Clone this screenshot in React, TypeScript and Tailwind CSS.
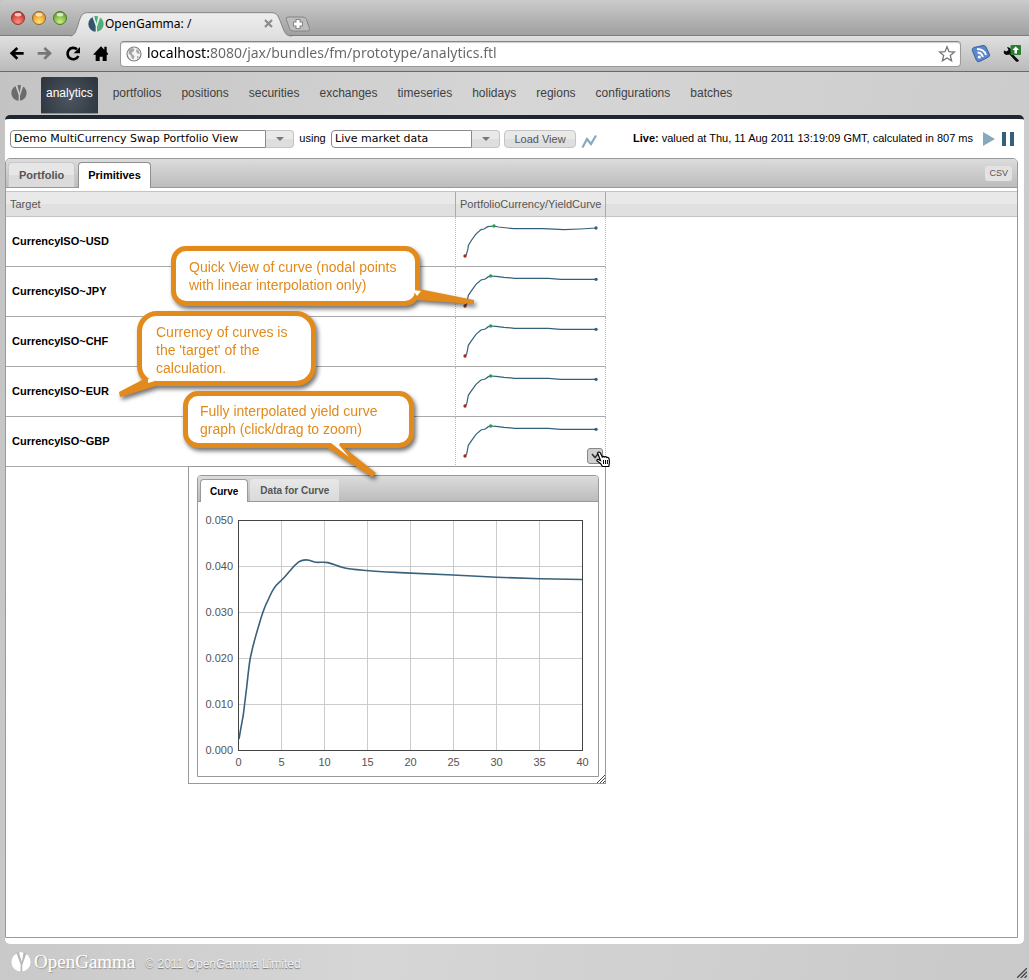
import React from "react";

const NAV = [
  "analytics",
  "portfolios",
  "positions",
  "securities",
  "exchanges",
  "timeseries",
  "holidays",
  "regions",
  "configurations",
  "batches",
];

const ROWS = ["USD", "JPY", "CHF", "EUR", "GBP"];

function GammaMark({ className, left, right, gap }: { className: string; left: string; right: string; gap: string }) {
  return (
    <svg viewBox="0 0 48 48" className={className} aria-hidden="true">
      <path d="M24 1 A23 23 0 0 0 24 47 Z" fill={left} />
      <path d="M24 1 A23 23 0 0 1 24 47 Z" fill={right} />
      <path d="M13 2 L19 0 L26 24 L30 1 L37 3 L27 32 V48 H23 V30 Z" fill={gap} />
      <path d="M20 1 H29 L25 19 Z" fill={right} />
    </svg>
  );
}

function TrafficLight({ from, to, ring }: { from: string; to: string; ring: string }) {
  const id = "light" + ring.slice(1);
  return (
    <svg viewBox="0 0 14 14" className="size-3.5" aria-hidden="true">
      <defs>
        <radialGradient id={id} cx="50%" cy="80%" r="75%">
          <stop offset="0" stopColor={from} />
          <stop offset="1" stopColor={to} />
        </radialGradient>
      </defs>
      <circle cx="7" cy="7" r="6.5" fill={`url(#${id})`} stroke={ring} />
      <ellipse cx="7" cy="3.6" rx="3.4" ry="1.9" fill="#fff" opacity="0.7" />
    </svg>
  );
}

function TitleBar() {
  return (
    <div className="flex h-9 items-center rounded-t-md border-b border-[#7d7d7d] bg-linear-to-b from-[#cbcbcb] to-[#a0a0a0] pl-[11px]">
      <div className="flex gap-[7px]">
        <TrafficLight from="#ff8d80" to="#c22a22" ring="#8a3a36" />
        <TrafficLight from="#ffe26a" to="#dd8a1e" ring="#96652a" />
        <TrafficLight from="#c9ef7c" to="#5d9c2c" ring="#4e7a30" />
      </div>
      <div className="relative ml-[3px] h-9 w-[222px]">
        <svg viewBox="210 32 666 78" className="absolute top-[11px] left-0 h-[26px] w-[222px]" aria-hidden="true">
          <defs>
            <linearGradient id="tabfill" x1="0" y1="0" x2="0" y2="1">
              <stop offset="0" stopColor="#eeeeee" />
              <stop offset="1" stopColor="#dfdfdf" />
            </linearGradient>
          </defs>
          <path
            d="M208 107 C224 107 226 96 232 80 C240 56 242 37 262 37 H814 C834 37 836 52 846 76 C854 98 858 107 876 107 V112 H208 Z"
            fill="url(#tabfill)"
          />
          <path
            d="M208 107 C224 107 226 96 232 80 C240 56 242 37 262 37 H814 C834 37 836 52 846 76 C854 98 858 107 876 107"
            fill="none"
            stroke="#858585"
            strokeWidth="3"
          />
        </svg>
        <div className="relative flex h-full items-center pt-[12px] pr-[19px] pl-[18px]">
          <GammaMark className="size-4" left="#33566e" right="#4fae78" gap="#ececec" />
          <span className="ml-px flex-1 font-['Noto_Sans',sans-serif] text-[12px] leading-4 text-black">OpenGamma: /</span>
          <button type="button" aria-label="Close tab" className="size-[9px]">
            <svg viewBox="0 0 9 9" className="size-[9px]">
              <path d="M1 1 L8 8 M8 1 L1 8" stroke="#8b8b8b" strokeWidth="2.2" />
            </svg>
          </button>
        </div>
      </div>
      <button type="button" aria-label="New tab" className="-ml-[7px] pt-[12px]">
        <svg viewBox="0 0 26 16" className="h-4 w-[26px]">
          <path d="M3 1 H18 Q20.500 1 21.500 3.500 L24.500 12.500 Q25 15 22.500 15 H8 Q5.500 15 4.500 12.500 L1.300 3.500 Q.8 1 3 1Z" fill="#bdbdbd" stroke="#858585" />
          <path d="M13 3 V13 M8 8 H18" stroke="#858585" strokeWidth="5" />
          <path d="M13 4 V12 M9 8 H17" stroke="#fff" strokeWidth="3" />
        </svg>
      </button>
    </div>
  );
}

function Toolbar() {
  return (
    <div className="flex h-9 items-center gap-3 border-b border-[#6a6a6a] bg-linear-to-b from-[#e0e0e0] to-[#bababa] pr-2 pl-2">
      <button type="button" aria-label="Back">
        <svg viewBox="25 138 48 48" className="size-4">
          <path d="M53 144 L36 160 L53 176 M36 160 H72" fill="none" stroke="#000" strokeWidth="8" />
        </svg>
      </button>
      <button type="button" aria-label="Forward">
        <svg viewBox="109 138 48 48" className="size-4">
          <path d="M134 144 L151 160 L134 176 M151 160 H114" fill="none" stroke="#777" strokeWidth="8" />
        </svg>
      </button>
      <button type="button" aria-label="Reload">
        <svg viewBox="193 138 48 48" className="size-4">
          <path d="M236 168 A17 17 0 1 1 232 148" fill="none" stroke="#000" strokeWidth="8" />
          <path d="M242 140 V160 H222 Z" fill="#000" />
        </svg>
      </button>
      <button type="button" aria-label="Home">
        <svg viewBox="277 136 48 48" className="size-4">
          <path d="M304 137 L314 147 V138 H321 V154 L328 162 H321 V181 H309 V168 H300 V181 H288 V162 H280 Z" fill="#000" />
        </svg>
      </button>
      <div className="-mr-0.5 flex h-[26px] min-w-0 flex-1 items-center rounded-[4px] border border-[#9a9a9a] border-t-[#858585] bg-white pr-1 pl-[5px] shadow-[inset_0_1px_1px_#ccc]">
        <svg viewBox="0 0 16 16" className="size-4 shrink-0" aria-hidden="true">
          <circle cx="8" cy="8" r="7" fill="#f4f4f4" stroke="#808080" strokeWidth="1.200" />
          <path d="M3 4 L6 2 L8.500 3 L7.500 5.500 L5.500 7 L7 9 L8.500 10 L7.500 13.500 L5.500 12 L5 9.500 L2.500 7.500 Z M10.500 3 L13 5 L13.800 8 L11.500 7.500 L10 5.500 Z M11 10 L13 10.500 L11 13 Z" fill="#a5a5a5" />
        </svg>
        <input
          type="text"
          aria-label="Address"
          defaultValue="localhost:8080/jax/bundles/fm/prototype/analytics.ftl"
          className="mb-0.5 ml-[5px] min-w-0 flex-1 bg-[linear-gradient(90deg,#000_62px,#666_62px)] bg-clip-text font-['Noto_Sans',sans-serif] text-[14px] leading-5 text-transparent outline-none"
        />
        <button type="button" aria-label="Bookmark">
          <svg viewBox="0 0 18 18" className="size-[18px]">
            <path d="M9 1.800 L11 6.700 L16.400 7.100 L12.300 10.500 L13.600 15.800 L9 12.900 L4.400 15.800 L5.700 10.500 L1.600 7.100 L7 6.700 Z" fill="#fff" stroke="#777" strokeWidth="1.300" />
          </svg>
        </button>
      </div>
      <button type="button" aria-label="RSS feed">
        <svg viewBox="0 0 20 20" className="size-5">
          <path d="M3 3.500 L12 1.500 Q14 1 15 3 L18.500 10.500 Q19 12 17.500 13 L8.500 17.500 Q6.500 18.500 5.500 16.500 L1.300 6.500 Q.8 4.300 3 3.500Z" fill="#5b88cc" stroke="#3560a6" />
          <path d="M6 5 Q13 5 15 11 M6.500 8.500 Q10.500 8.500 12 13" fill="none" stroke="#fff" strokeWidth="1.800" />
          <circle cx="8.300" cy="13" r="1.600" fill="#fff" />
        </svg>
      </button>
      <button type="button" aria-label="Settings">
        <svg viewBox="0 0 18 18" className="size-[18px]">
          <path d="M4 2 L5.500 5 L3.500 6.500 L1 5.500 Q0 9.500 3.500 10 L6.500 9.500 L13 16.500 Q15 17.500 16 15.500 L8.500 8 Q9.500 3 4 2Z" fill="#0a0a0a" />
          <rect x="7.500" y="0" width="10.500" height="10" rx="1" fill="#2c7d33" />
          <path d="M12.700 1.500 L16 5 H14 V8.500 H11.500 V5 H9.400 Z" fill="#fff" />
        </svg>
      </button>
    </div>
  );
}

function Nav() {
  return (
    <nav className="flex h-[43px] items-start gap-2.5 pt-[5px] pl-[11px]">
      <a href="#home" aria-label="Home page" className="mt-2 mr-1">
        <GammaMark className="size-4" left="#6b6b6b" right="#6b6b6b" gap="#cacaca" />
      </a>
      {NAV.map((item, i) => (
        <a
          key={item}
          href={"#" + item}
          className={
            i === 0
              ? "h-[37px] rounded-t-xs border-b border-[#8b8f92] bg-[radial-gradient(circle_at_50%_60%,#4d565e,#2b343d)] px-[5px] text-[12px] leading-8 text-white"
              : "h-[37px] px-[5px] text-[12px] leading-8 text-[#3f3f3f]"
          }
        >
          {item}
        </a>
      ))}
    </nav>
  );
}

function Combo({ label, value, width }: { label: string; value: string; width: string }) {
  return (
    <div className="flex h-[18px]">
      <input
        type="text"
        aria-label={label}
        defaultValue={value}
        className={
          width +
          " rounded-l-[4px] border border-[#8a8a8a] bg-white pl-[3px] font-['DejaVu_Sans',sans-serif] text-[11px] leading-4 text-black outline-none"
        }
      />
      <button
        type="button"
        aria-label={"Open " + label}
        className="flex w-7 items-center justify-center rounded-r-[4px] border border-l-0 border-[#c4c4c4] bg-linear-to-b from-[#e9e9e9] from-50% to-[#dedede] to-50%"
      >
        <svg viewBox="0 0 8 4" className="h-1 w-2">
          <path d="M0 0 H8 L4 4 Z" fill="#777" />
        </svg>
      </button>
    </div>
  );
}

function Controls() {
  return (
    <div className="flex h-[39px] items-center pr-[10px] pl-[5px] text-[11px] text-black">
      <Combo label="view" value="Demo MultiCurrency Swap Portfolio View" width="w-64" />
      <span className="mx-[5px] w-[27px] text-center">using</span>
      <Combo label="market data" value="Live market data" width="w-[141px]" />
      <button
        type="button"
        className="ml-1 h-[18px] w-[72px] rounded-[4px] border border-[#c4c4c4] bg-linear-to-b from-[#e9e9e9] from-50% to-[#dedede] to-50% text-[11px] leading-4 text-[#555]"
      >
        Load View
      </button>
      <svg viewBox="0 0 18 16" className="mt-1 ml-[5px] h-4 w-[18px]" aria-hidden="true">
        <path d="M1.500 14.500 L6 6 L10 11 L15 2.500" fill="none" stroke="#86a9bf" strokeWidth="2.200" />
      </svg>
      <div className="ml-auto whitespace-nowrap">
        <b>Live:</b> valued at Thu, 11 Aug 2011 13:19:09 GMT, calculated in 807 ms
      </div>
      <button type="button" aria-label="Play" className="ml-[10px]">
        <svg viewBox="0 0 12 14" className="h-3.5 w-3">
          <path d="M0 0 L12 7 L0 14 Z" fill="#86a9bf" />
        </svg>
      </button>
      <button type="button" aria-label="Pause" className="ml-[7px]">
        <svg viewBox="0 0 12 14" className="h-3.5 w-3">
          <path d="M0 0 H4 V14 H0 Z M8 0 H12 V14 H8 Z" fill="#35607c" />
        </svg>
      </button>
    </div>
  );
}

function Sparkline({ usd }: { usd: boolean }) {
  const points = usd
    ? "75,228 79,224 84,206 85,196 95,180 107,163 123,149 132,147 143,140 162,138 175,141 222,146 310,146 372,149 420,147 468,144"
    : "75,168 80,162 85,136 93,124 108,103 123,90 136,87 145,80 152,78 168,79 192,82 224,85 325,85 362,88 468,88";
  return (
    <svg viewBox={usd ? "48 111 447 147" : "48 51 447 147"} className="block h-[49px] w-[149px]" aria-hidden="true">
      <polyline points={points} fill="none" stroke="#33617c" strokeWidth="3.600" />
      <circle cx="75" cy={usd ? 228 : 168} r="5" fill="#b22414" />
      <circle cx={usd ? 162 : 152} cy={usd ? 138 : 78} r="5" fill="#1fa53c" />
      <circle cx="468" cy={usd ? 144 : 88} r="5" fill="#33617c" />
    </svg>
  );
}

function CurveChart() {
  const ys = [520.5, 566.5, 612.5, 658.5, 704.5, 750.5];
  const yLabels = ["0.050", "0.040", "0.030", "0.020", "0.010", "0.000"];
  const xs = [238.5, 281.5, 324.5, 367.5, 410.5, 453.5, 496.5, 539.5, 582.5];
  return (
    <svg
      viewBox="198 502 400 274"
      className="block h-[274px] w-full font-['Liberation_Sans',Arial,sans-serif] text-[11px]"
      role="img"
      aria-label="Yield curve"
    >
      {ys.slice(1, 5).map((y) => (
        <path key={y} d={`M239 ${y} H582`} stroke="#ccc" />
      ))}
      {xs.slice(1, 8).map((x) => (
        <path key={x} d={`M${x} 521 V750`} stroke="#ccc" />
      ))}
      <rect x="238.500" y="520.500" width="344" height="230" fill="none" stroke="#444" />
      <path
        d="M239 739 C241 727 242 722 243.300 715 L246.700 687 C248 676 249 664 250.500 657 C252 650 254 642 256 635 C258 628 259 625 261 618 C263 612 265 606 267.300 601.700 C270 596 271 593 273.300 589.300 C276 584 279 583 281.700 580 C285 577 287 574 290 570.700 C293 567 296 564 299 561.700 C302 560 307 559.800 309.300 560.300 C312 561 314 562.300 316 562.300 C320 562.600 324 561.700 328 562.600 C333 563.700 337 566 342 567.300 C350 569.500 359 569.900 366.700 570.500 C378 571.600 390 572.100 400 572.600 L453 575 L496.700 577.300 L540 578.700 L582 579.500"
        fill="none"
        stroke="#3a617c"
        strokeWidth="1.600"
      />
      {yLabels.map((t, i) => (
        <text key={t} x="233" y={ys[i] + 3.5} textAnchor="end" fill="#545454">
          {t}
        </text>
      ))}
      {xs.map((x, i) => (
        <text key={x} x={x} y="766" textAnchor="middle" fill="#545454">
          {i * 5}
        </text>
      ))}
    </svg>
  );
}

function CurvePopup() {
  return (
    <div className="absolute top-full -right-px z-10 w-[418px] border border-[#999] bg-white p-2 pr-1.5 pb-1.5 text-[10px]">
      <div className="rounded-t-[4px] border border-[#999]">
        <div role="tablist" className="flex h-[26px] items-end gap-0.5 rounded-t-[3px] border-b border-[#999] bg-linear-to-b from-[#dcdcdc] to-[#bcbcbc] pl-0.5">
          <button
            type="button"
            role="tab"
            aria-selected="true"
            className="-mb-px h-[23px] rounded-t-[4px] border border-b-0 border-[#999] bg-white px-[9px] font-bold text-black"
          >
            Curve
          </button>
          <button type="button" role="tab" aria-selected="false" className="h-[22px] rounded-t-[4px] bg-linear-to-b from-[#e8e8e8] to-[#dadada] px-[10px] font-bold text-[#555]">
            Data for Curve
          </button>
        </div>
        <CurveChart />
      </div>
      <ResizeGrip className="absolute right-0 bottom-0 size-2" />
    </div>
  );
}

function ResizeGrip({ className }: { className: string }) {
  return (
    <svg viewBox="0 0 8 8" className={className} aria-hidden="true">
      <path d="M0 8 L8 0 M3 8 L8 3 M6 8 L8 6" stroke="#444" strokeWidth="1" />
    </svg>
  );
}

function HandCursor() {
  return (
    <svg viewBox="0 0 15 17" className="absolute top-[34px] left-[140px] z-20 h-[17px] w-[15px]" aria-hidden="true">
      <path
        d="M1.500 1.800 Q3 .2 4.300 1.800 L6.300 6 Q7.500 5 8.500 6 Q10 5.200 10.800 6.500 Q12.500 6 13 7.500 L13.500 11 L12.800 15.500 H6.500 L4.500 12.500 L1 10 Q.5 8.500 2 8.300 L4.500 9.500 Z"
        fill="#fff"
        stroke="#000"
        strokeWidth="1.200"
      />
      <path d="M7.500 9 V13 M9.500 9 V13 M11.400 9 V13" stroke="#000" />
    </svg>
  );
}

function Callout({ box, tail, children }: { box: string; tail: React.ReactNode; children: React.ReactNode }) {
  return (
    <div
      className={
        "absolute z-30 border-[5px] border-[#e28a1b] bg-white text-[14px] leading-[18px] text-[#e28a1b] drop-shadow-[2px_3px_2px_#0000008c] " +
        box
      }
    >
      {tail}
      <p className="relative">{children}</p>
    </div>
  );
}

function Callouts() {
  return (
    <>
      <Callout
        box="top-[87px] left-[165px] w-[249px] rounded-[15px] py-[7px] pl-[13px]"
        tail={
          <svg viewBox="0 0 64 20" className="absolute bottom-[-4px] left-[237px] h-5 w-16" aria-hidden="true">
            <path d="M6 4 L61 15 V19 L4 15 Z" fill="#e28a1b" />
            <path d="M0 5 L8 6 L4 11 Z" fill="#fff" />
          </svg>
        }
      >
        Quick View of curve (nodal points
        <br />
        with linear interpolation only)
      </Callout>
      <Callout
        box="top-[152px] left-[131px] w-[179px] rounded-[20px] pt-[7px] pb-1 pl-[14px]"
        tail={
          <svg viewBox="0 0 40 20" className="absolute bottom-[-17px] left-[-24px] h-5 w-10" aria-hidden="true">
            <path d="M26 1 L1 14 L2 19 L38 8 L38 4 Z" fill="#e28a1b" />
            <path d="M30 1 V5 L37 3 V0 Z" fill="#fff" />
          </svg>
        }
      >
        Currency of curves is
        <br />
        the 'target' of the
        <br />
        calculation.
      </Callout>
      <Callout
        box="top-[232px] left-[177px] w-[231px] rounded-[15px] pt-[6px] pb-[5px] pl-3"
        tail={
          <svg viewBox="0 0 54 34" className="absolute bottom-[-34px] left-[138px] h-[34px] w-[54px]" aria-hidden="true">
            <path d="M0 4 L46 34 L50 30 L16 3 Z" fill="#e28a1b" />
            <path d="M5 0 L23 14 L13 2 L14 0 Z" fill="#fff" />
          </svg>
        }
      >
        Fully interpolated yield curve
        <br />
        graph (click/drag to zoom)
      </Callout>
    </>
  );
}

function Grid() {
  const head = "h-[26px] border-y border-[#c4c4c4] bg-linear-to-b from-[#e9e9e9] from-50% to-[#e0e0e0] to-50% px-1 font-normal text-[#555]";
  return (
    <table className="w-full table-fixed border-separate border-spacing-0 text-left text-[11px]">
      <thead>
        <tr>
          <th className={head + " w-[450px] border-r border-r-[#aaa]"}>Target</th>
          <th className={head + " w-[150px] border-r border-r-[#aaa] whitespace-nowrap"}>PortfolioCurrency/YieldCurve</th>
          <th className={head} aria-label="Empty" />
        </tr>
      </thead>
      <tbody>
        {ROWS.map((ccy) => (
          <tr key={ccy}>
            <td className="h-[50px] border-r border-b border-[#aaa] border-r-[#bbb] pl-1.5 font-bold text-black [border-right-style:dotted]">
              CurrencyISO~{ccy}
            </td>
            <td className="relative h-[50px] border-r border-b border-[#aaa] border-r-[#bbb] p-0 [border-right-style:dotted]">
              <Sparkline usd={ccy === "USD"} />
              {ccy === "GBP" && (
                <>
                  <button
                    type="button"
                    aria-label="Expand curve"
                    className="absolute top-[31px] left-[131px] z-20 flex size-4 items-center justify-center rounded-[3px] border border-[#888] bg-[#cfcfcf]"
                  >
                    <svg viewBox="0 0 8 8" className="size-2">
                      <path d="M1 2 L4 5.500 L7 2" fill="none" stroke="#333" strokeWidth="1.600" />
                    </svg>
                  </button>
                  <HandCursor />
                  <CurvePopup />
                </>
              )}
            </td>
            <td />
          </tr>
        ))}
      </tbody>
    </table>
  );
}

export default function App() {
  return (
    <div className="flex min-h-screen flex-col bg-[linear-gradient(100deg,#c3c3c3,#d6d6d6_45%,#c9c9c9)] font-['Liberation_Sans',Arial,sans-serif]">
      <TitleBar />
      <Toolbar />
      <Nav />
      <main className="mr-[5px] ml-[5px] flex flex-1 flex-col rounded-[5px] border-t-4 border-[#1f2731] bg-white">
        <Controls />
        <section className="relative mr-1.5 mb-1.5 flex flex-1 flex-col rounded-t-[5px] border border-[#999]">
          <div role="tablist" className="mb-[3px] flex h-[29px] items-end rounded-t-[4px] border-b border-[#999] bg-linear-to-b from-[#dcdcdc] to-[#bcbcbc] pl-0.5">
            <button
              type="button"
              role="tab"
              aria-selected="false"
              className="h-[25px] rounded-t-[4px] border border-b-0 border-[#c8c8c8] bg-linear-to-b from-[#e6e6e6] from-50% to-[#dbdbdb] to-50% px-[10px] text-[11px] font-bold text-[#555]"
            >
              Portfolio
            </button>
            <button
              type="button"
              role="tab"
              aria-selected="true"
              className="-mb-px ml-[3px] h-[26px] rounded-t-[4px] border border-b-0 border-[#8f8f8f] bg-white px-[9px] text-[11px] font-bold text-black"
            >
              Primitives
            </button>
            <button
              type="button"
              className="mr-[5px] mb-[6px] ml-auto h-[15px] rounded-[3px] bg-[#e3e3e3] px-1 text-[9px] leading-[15px] text-[#555]"
            >
              CSV
            </button>
          </div>
          <Grid />
          <Callouts />
        </section>
      </main>
      <footer className="relative flex h-9 items-center pl-[11px] text-white">
        <GammaMark className="size-5" left="#fff" right="#fff" gap="#b8b8b8" />
        <span className="ml-[3px] font-['Liberation_Serif',serif] text-[19px] leading-6 [text-shadow:1px_1px_1px_#999]">OpenGamma</span>
        <span className="ml-[10px] pt-1 text-[12px] text-[#f0f0f0] [text-shadow:0_1px_1px_#777]">© 2011 OpenGamma Limited</span>
        <ResizeGrip className="absolute right-0.5 bottom-0.5 size-2.5" />
      </footer>
    </div>
  );
}
